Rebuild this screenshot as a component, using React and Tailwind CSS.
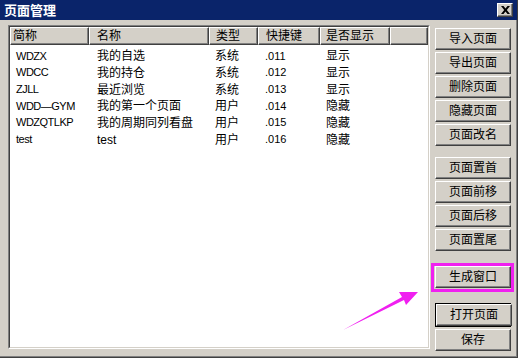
import React from 'react';

const cols = [
    { name: '简称', w: 'w-[79px]', hp: 'pl-[2px]' },
    { name: '名称', w: 'w-[120px]', hp: 'pl-[7px]' },
    { name: '类型', w: 'w-[49px]', hp: 'pl-[6px]' },
    { name: '快捷键', w: 'w-[62px]', hp: 'pl-[7px]' },
    { name: '是否显示', w: 'w-[70px]', hp: 'pl-[5px]' },
];

const rows = [
    ['WDZX', '我的自选', '系统', '.011', '显示'],
    ['WDCC', '我的持仓', '系统', '.012', '显示'],
    ['ZJLL', '最近浏览', '系统', '.013', '显示'],
    ['WDD—GYM', '我的第一个页面', '用户', '.014', '隐藏'],
    ['WDZQTLKP', '我的周期同列看盘', '用户', '.015', '隐藏'],
    ['test', 'test', '用户', '.016', '隐藏'],
];

// raised win2k style button
function Btn({ children, className = '' }) {
    return (
        <div className={`h-[22px] w-[76px] bg-[#d4d0c8] border border-t-white border-l-white border-r-[#404040] border-b-[#404040] shadow-[inset_-1px_-1px_0_#808080] flex items-center justify-center text-[12px] leading-none text-black ${className}`}>
            {children}
        </div>
    );
}

export default function App() {
    return (
        <div className="relative w-[518px] h-[358px] overflow-hidden bg-[#d4d0c8] flex flex-col border-r border-b border-[#404040] shadow-[inset_-1px_-1px_0_#808080] font-['Liberation_Sans','Noto_Sans_CJK_SC',sans-serif] text-black">
            {/* Title bar */}
            <div className="h-[20px] bg-[#0a246a] flex items-center justify-between pl-[4px] pr-[4px] shrink-0">
                <span className="text-white font-bold text-[13px] leading-none">页面管理</span>
                <div className="w-[16px] h-[14px] bg-[#d4d0c8] border border-t-white border-l-white border-r-[#404040] border-b-[#404040] shadow-[inset_-1px_-1px_0_#808080] flex items-center justify-center">
                    <svg width="9" height="8" viewBox="0 0 9 8">
                        <path d="M0 0h2.5l2 2.6L6.5 0H9L5.8 4 9 8H6.5l-2-2.6L2.5 8H0l3.2-4z" fill="#000" />
                    </svg>
                </div>
            </div>

            <div className="flex pl-[8px] pt-[5px]">
                {/* List */}
                <div className="w-[422px] h-[324px] border border-t-[#808080] border-l-[#808080] border-r-white border-b-white">
                    <div className="h-full border border-t-[#404040] border-l-[#404040] border-r-[#d4d0c8] border-b-[#d4d0c8] bg-white flex flex-col">
                        <div className="flex h-[18px] shrink-0">
                            {cols.map((c) => (
                                <div key={c.name} className={`${c.w} ${c.hp} h-full bg-[#d4d0c8] border border-t-white border-l-white border-r-[#404040] border-b-[#404040] shadow-[inset_-1px_-1px_0_#808080] flex items-center text-[12px] leading-none`}>
                                    {c.name}
                                </div>
                            ))}
                            <div className="flex-1 h-full bg-[#d4d0c8] border border-t-white border-l-white border-r-[#404040] border-b-[#404040] shadow-[inset_-1px_-1px_0_#808080]" />
                        </div>
                        <div className="pt-[3px]">
                            {rows.map((r, i) => (
                                <div key={i} className="flex h-[16.67px] items-center text-[12px] leading-none">
                                    <div className="w-[79px] pl-[6px] text-[11px] tracking-[-0.5px]">{r[0]}</div>
                                    <div className="w-[120px] pl-[8px]">{r[1]}</div>
                                    <div className="w-[49px] pl-[6px]">{r[2]}</div>
                                    <div className="w-[62px] pl-[7px] text-[11px]">{r[3]}</div>
                                    <div className="w-[70px] pl-[6px]">{r[4]}</div>
                                </div>
                            ))}
                        </div>
                    </div>
                </div>

                {/* Buttons */}
                <div className="ml-[5px] w-[76px] flex flex-col pt-[3px]">
                    <div className="flex flex-col gap-[2px]">
                        <Btn>导入页面</Btn>
                        <Btn>导出页面</Btn>
                        <Btn>删除页面</Btn>
                        <Btn>隐藏页面</Btn>
                        <Btn>页面改名</Btn>
                    </div>
                    <div className="flex flex-col gap-[2px] mt-[11px]">
                        <Btn>页面置首</Btn>
                        <Btn>页面前移</Btn>
                        <Btn>页面后移</Btn>
                        <Btn>页面置尾</Btn>
                    </div>
                    <div className="relative mt-[15px]">
                        <Btn>生成窗口</Btn>
                        <span className="absolute -left-[4px] -right-[3px] -top-[3px] -bottom-[4px] border-[3px] border-[#f020f0]" />
                    </div>
                    <div className="mt-[15px] border border-black">
                        <Btn className="w-[74px] h-[20px]">打开页面</Btn>
                    </div>
                    <Btn className="mt-[2px]">保存</Btn>
                </div>
            </div>

            {/* annotation arrow */}
            <svg className="absolute left-0 top-0 pointer-events-none" width="518" height="358" viewBox="0 0 518 358">
                <polygon points="343,330 402,297 399,292 418,292 406,305 404,300" fill="#f020f0" />
            </svg>
        </div>
    );
}
